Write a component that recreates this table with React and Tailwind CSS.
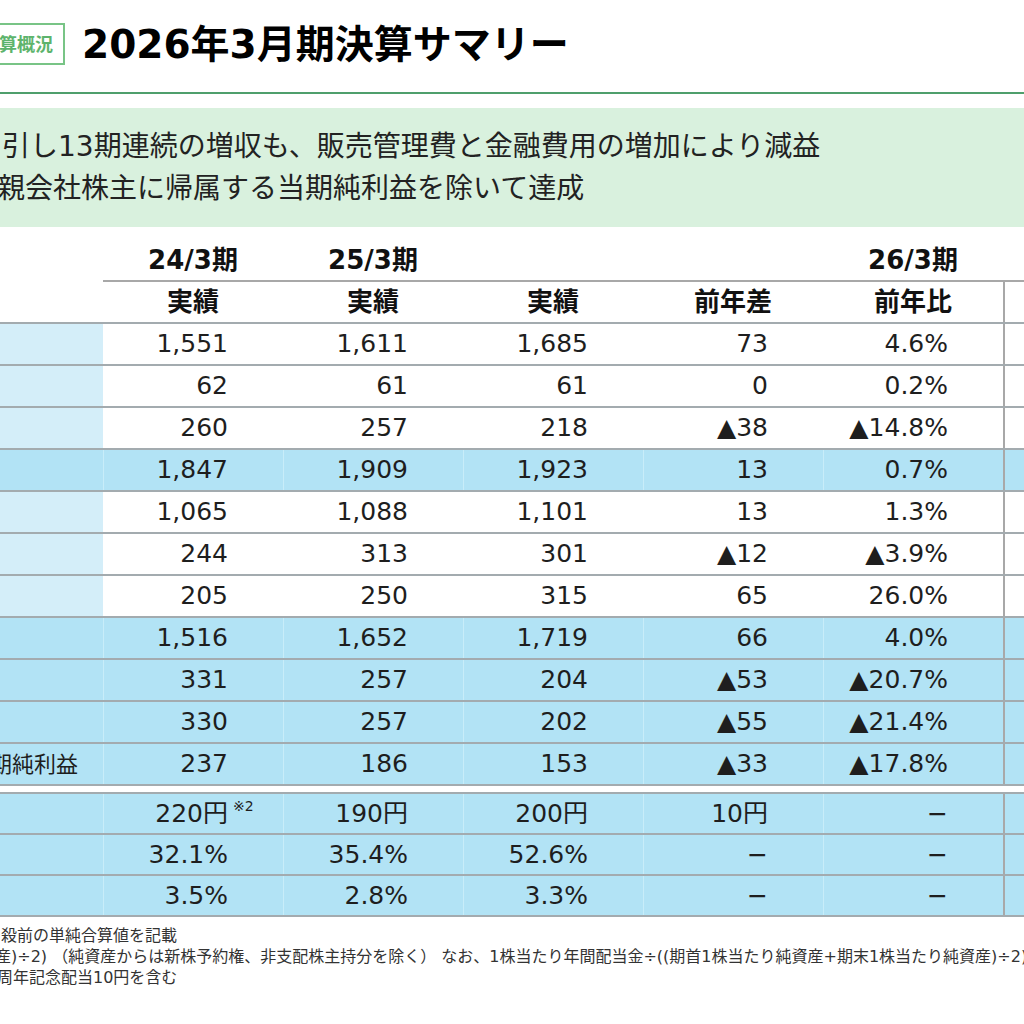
import React from 'react';

const FONT = "[font-family:'DejaVu_Sans','Noto_Sans_CJK_JP',sans-serif]";

const rows = [
  { blue: false, v: ['1,551', '1,611', '1,685', '73', '4.6%'] },
  { blue: false, v: ['62', '61', '61', '0', '0.2%'] },
  { blue: false, v: ['260', '257', '218', '▲38', '▲14.8%'] },
  { blue: true, v: ['1,847', '1,909', '1,923', '13', '0.7%'] },
  { blue: false, v: ['1,065', '1,088', '1,101', '13', '1.3%'] },
  { blue: false, v: ['244', '313', '301', '▲12', '▲3.9%'] },
  { blue: false, v: ['205', '250', '315', '65', '26.0%'] },
  { blue: true, v: ['1,516', '1,652', '1,719', '66', '4.0%'] },
  { blue: true, v: ['331', '257', '204', '▲53', '▲20.7%'] },
  { blue: true, v: ['330', '257', '202', '▲55', '▲21.4%'] },
  { blue: true, label: '親会社株主に帰属する当期純利益', v: ['237', '186', '153', '▲33', '▲17.8%'] },
];

const bottomRows = [
  ['220円', '190円', '200円', '10円', '−'],
  ['32.1%', '35.4%', '52.6%', '−', '−'],
  ['3.5%', '2.8%', '3.3%', '−', '−'],
];

function ValueCell({ children, blue }) {
  return (
    <div
      className={`w-[180px] h-full flex items-center justify-end pr-[55px] whitespace-nowrap ${
        blue ? 'border-l border-[#c8edf9]' : ''
      }`}
    >
      {children}
    </div>
  );
}

function DataRow({ row, height = 'h-[42px]' }) {
  const bg = row.blue ? 'bg-[#b2e3f5]' : 'bg-white';
  return (
    <div className={`flex ${height} border-b-2 border-[#a3abaf] ${bg}`}>
      <div
        className={`w-[103px] h-full flex items-center justify-end pr-[25px] overflow-hidden whitespace-nowrap text-[22px] ${
          row.blue ? 'bg-[#b2e3f5]' : 'bg-[#d4eef9]'
        }`}
      >
        {row.label}
      </div>
      {row.v.map((val, i) => (
        <ValueCell key={i} blue={row.blue}>
          {val === '220円' ? (
            <span className="relative">
              220円
              <span className="absolute left-full top-[1px] ml-[5px] text-[14px]">※2</span>
            </span>
          ) : (
            val
          )}
        </ValueCell>
      ))}
      <div className="flex-1 h-full border-l-2 border-[#a8a8a8]" />
    </div>
  );
}

function SummaryTable() {
  return (
    <div className="mt-[13px] text-[25px] text-[#1e1e1e]">
      <div className="flex h-[42px] text-[26px] font-bold text-[#111]">
        <div className="w-[103px]" />
        <div className="flex flex-1 border-b-2 border-[#a8a8a8]">
          <div className="w-[180px] flex items-center justify-center">24/3期</div>
          <div className="w-[180px] flex items-center justify-center">25/3期</div>
          <div className="w-[180px]" />
          <div className="w-[180px]" />
          <div className="w-[180px] flex items-center justify-center">26/3期</div>
        </div>
      </div>
      <div className="flex h-[42px] text-[26px] font-bold text-[#111] border-b-2 border-[#a3abaf]">
        <div className="w-[103px]" />
        <div className="w-[180px] flex items-center justify-center">実績</div>
        <div className="w-[180px] flex items-center justify-center">実績</div>
        <div className="w-[180px] flex items-center justify-center">実績</div>
        <div className="w-[180px] flex items-center justify-center">前年差</div>
        <div className="w-[180px] flex items-center justify-center">前年比</div>
        <div className="flex-1 border-l-2 border-[#a8a8a8]" />
      </div>
      {rows.map((row, i) => (
        <DataRow key={i} row={row} />
      ))}
      <div className="h-[6px] bg-white" />
      <div className="border-t-2 border-[#a3abaf]">
        {bottomRows.map((v, i) => (
          <DataRow key={i} row={{ blue: true, v }} height="h-[41px]" />
        ))}
      </div>
    </div>
  );
}

export default function App() {
  return (
    <div className={`w-[1024px] h-[1024px] overflow-hidden bg-white text-[#1a1a1a] ${FONT}`}>
      <div className="flex items-center h-[42px] mt-[23px]">
        <div className="ml-[-31px] h-[42px] px-[10px] border-2 border-[#78c486] flex items-center text-[18px] font-bold text-[#5db46c] whitespace-nowrap">
          決算概況
        </div>
        <h1 className="ml-[17px] text-[39px] font-bold leading-none text-black whitespace-nowrap">
          2026年3月期決算サマリー
        </h1>
      </div>
      <div className="mt-[27px] h-[2px] bg-[#4f9f6c]" />
      <div className="mt-[14px] h-[119px] bg-[#d9f1de] flex flex-col justify-center text-[28px] leading-[42px] text-[#222] whitespace-nowrap overflow-hidden">
        <div className="ml-[2px]">引し13期連続の増収も、販売管理費と金融費用の増加により減益</div>
        <div className="ml-[-3px]">親会社株主に帰属する当期純利益を除いて達成</div>
      </div>
      <SummaryTable />
      <div className="mt-[8px] text-[16px] leading-[21px] text-[#333] whitespace-nowrap overflow-hidden">
        <div className="ml-[1px]">殺前の単純合算値を記載</div>
        <div className="ml-[-5px]">
          産)÷2) （純資産からは新株予約権、非支配株主持分を除く） なお、1株当たり年間配当金÷((期首1株当たり純資産+期末1株当たり純資産)÷2)
        </div>
        <div className="ml-[-3px]">周年記念配当10円を含む</div>
      </div>
    </div>
  );
}
